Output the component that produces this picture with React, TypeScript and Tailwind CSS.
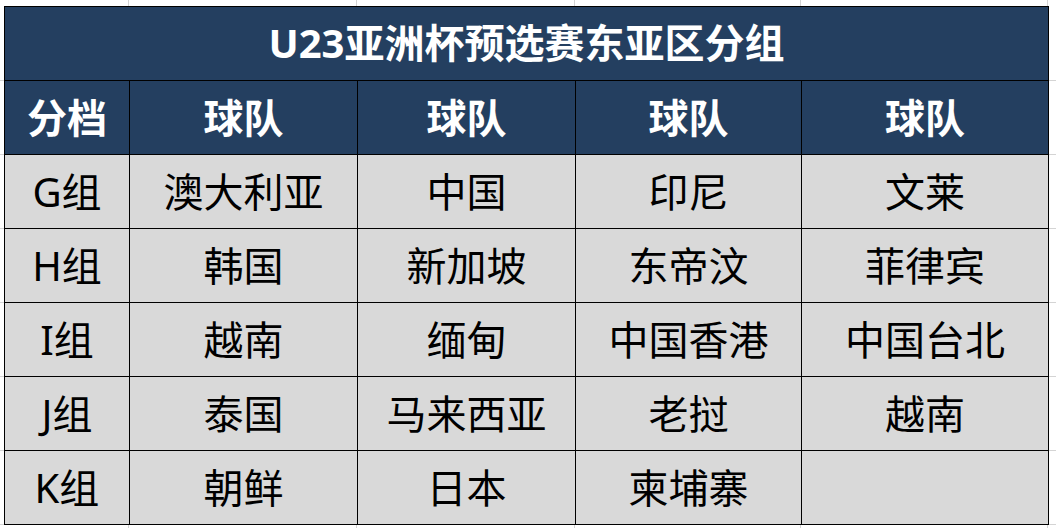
const cols = [125, 228, 218, 226, 247]

const rows: string[][] = [
  ["G组", "澳大利亚", "中国", "印尼", "文莱"],
  ["H组", "韩国", "新加坡", "东帝汶", "菲律宾"],
  ["I组", "越南", "缅甸", "中国香港", "中国台北"],
  ["J组", "泰国", "马来西亚", "老挝", "越南"],
  ["K组", "朝鲜", "日本", "柬埔寨", ""],
]

function EdgeStrip({ height }: { height: string }) {
  // faint spreadsheet gridlines above/below the table
  return (
    <div className={`flex ${height}`}>
      <div className="w-[4px] shrink-0" />
      {cols.map((w, i) => (
        <div key={i} className="shrink-0 border-r border-[#d4d4d4]" style={{ width: w }} />
      ))}
      <div className="flex-1" />
    </div>
  )
}

function SideStrip({ width }: { width: string }) {
  return (
    <div className={`flex flex-col ${width} pt-[1px]`}>
      {Array.from({ length: 7 }).map((_, i) => (
        <div key={i} className="h-[74px] border-b border-[#d4d4d4]" />
      ))}
    </div>
  )
}

export default function App() {
  return (
    <div className="w-[1056px] h-[528px] overflow-hidden bg-white font-['Noto_Sans','Noto_Sans_CJK_SC',sans-serif]">
      <EdgeStrip height="h-[6px]" />
      <div className="flex">
        <SideStrip width="w-[4px]" />
        <div className="w-[1045px] border-l border-t border-black">
          <div className="h-[74px] flex items-center justify-center bg-[#243f60] border-r border-b border-black text-white font-bold text-[40px] leading-none pb-[2px]">
            U23亚洲杯预选赛东亚区分组
          </div>
          <div className="grid grid-cols-[125px_228px_218px_226px_247px]">
            {["分档", "球队", "球队", "球队", "球队"].map((t, i) => (
              <div
                key={i}
                className="h-[74px] flex items-center justify-center bg-[#243f60] border-r border-b border-black text-white font-bold text-[40px] leading-none"
              >
                {t}
              </div>
            ))}
            {rows.map((r, ri) =>
              r.map((t, ci) => (
                <div
                  key={`${ri}-${ci}`}
                  className="h-[74px] flex items-center justify-center bg-[#d9d9d9] border-r border-b border-black text-black text-[40px] leading-none"
                >
                  {t}
                </div>
              ))
            )}
          </div>
        </div>
        <SideStrip width="flex-1" />
      </div>
      <EdgeStrip height="h-[3px]" />
    </div>
  )
}
